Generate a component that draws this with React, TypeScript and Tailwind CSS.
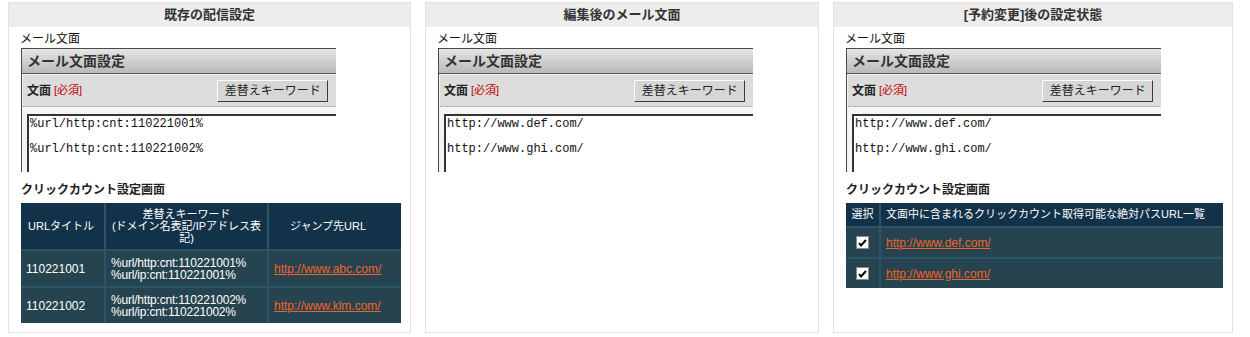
import React from 'react';

const jp = { fontFamily: '"Liberation Sans", "Noto Sans CJK JP", sans-serif' };
const mono = { fontFamily: '"Liberation Mono", "DejaVu Sans Mono", monospace' };

const CheckBox = () => (
  <div className="w-[13px] h-[13px] bg-white border border-[#8a8a8a] flex items-center justify-center">
    <svg width="9" height="8" viewBox="0 0 9 8">
      <path d="M1 4 L3 6.5 L8 1" fill="none" stroke="#000" strokeWidth="2" />
    </svg>
  </div>
);

const MailBox = ({ lines }: { lines: string[] }) => (
  <div className="w-[315px] h-[124px] overflow-hidden">
    <div className="w-[330px] border-t border-l border-[#4a4a4a] bg-[#f4f4f4] h-[140px]">
      <div className="h-[25px] bg-gradient-to-b from-[#e6e6e6] to-[#b9b9b9] border-b border-[#555] flex items-center pl-[5px] text-[14px] font-bold text-[#333]">
        メール文面設定
      </div>
      <div className="mt-[1px] ml-[1px] h-[32px] bg-[#dcdcdc] border-b border-dotted border-[#9a9a9a] flex items-center pl-[4px]">
        <span className="text-[12px] font-bold text-[#222]">文面</span>
        <span className="ml-[3px] text-[11px] text-[#c00000]">[必須]</span>
        <button className="ml-[135px] w-[111px] h-[22px] bg-[#d6d6d6] border border-t-white border-l-white border-b-[#3a3a3a] border-r-[#3a3a3a] text-[12px] text-[#222] leading-none">
          差替えキーワード
        </button>
      </div>
      <div className="ml-[5px] mt-[7px] bg-white border-t-2 border-l-2 border-[#333] pt-[2px] pl-[1px] h-[80px]">
        {lines.map((l, i) => (
          <div key={i} style={mono} className="text-[12px] leading-[12.5px] h-[25px] text-[#111]">
            {l}
          </div>
        ))}
      </div>
    </div>
  </div>
);

const Panel = ({ title, width, children }: { title: string; width: string; children: React.ReactNode }) => (
  <div className={`${width} h-[331px] border border-[#e2e2e2] bg-white flex flex-col`}>
    <div className="h-[24px] bg-[#eeedeb] flex items-center justify-center text-[13px] font-bold text-[#333]">{title}</div>
    <div className="pl-[11px] pt-[3px]">
      <div className="text-[12px] leading-[18px] text-[#111]">メール文面</div>
      <div className="pl-[1px]">{children}</div>
    </div>
  </div>
);

const App: React.FC = () => {
  const cellHead = 'bg-[#12324a] text-white text-[11px] whitespace-nowrap';
  const cellRow = 'bg-[#25444f] text-white text-[12px] whitespace-nowrap';

  return (
    <div style={jp} className="w-[1250px] h-[337px] bg-white flex pt-[2px] pl-[8px] gap-[14px]">
      <Panel title="既存の配信設定" width="w-[403px]">
        <MailBox lines={['%url/http:cnt:110221001%', '%url/http:cnt:110221002%']} />
        <div className="mt-[10px] text-[12px] leading-[16px] font-bold text-[#222]">クリックカウント設定画面</div>
        <div className="mt-[5px] w-[380px] bg-[#2a5566] grid grid-cols-[83px_161px_1fr] gap-[2px]">
          <div className={`${cellHead} h-[46px] flex items-center pl-[7px]`}>URLタイトル</div>
          <div className={`${cellHead} h-[46px] flex items-center justify-center text-center leading-[12px]`}>
            <span>
              差替えキーワード<br />(ドメイン名表記/IPアドレス表<br />記)
            </span>
          </div>
          <div className={`${cellHead} h-[46px] flex items-center justify-center pr-[14px]`}>ジャンプ先URL</div>

          <div className={`${cellRow} h-[35px] flex items-center pl-[5px]`}>110221001</div>
          <div className={`${cellRow} h-[35px] flex flex-col justify-center pl-[5px] text-[11px] leading-[12px] tracking-[-0.2px]`}>
            <span>%url/http:cnt:110221001%</span>
            <span>%url/ip:cnt:110221001%</span>
          </div>
          <div className={`${cellRow} h-[35px] flex items-center pl-[5px]`}>
            <span className="text-[#f3622c] underline">http://www.abc.com/</span>
          </div>

          <div className={`${cellRow} h-[35px] flex items-center pl-[5px]`}>110221002</div>
          <div className={`${cellRow} h-[35px] flex flex-col justify-center pl-[5px] text-[11px] leading-[12px] tracking-[-0.2px]`}>
            <span>%url/http:cnt:110221002%</span>
            <span>%url/ip:cnt:110221002%</span>
          </div>
          <div className={`${cellRow} h-[35px] flex items-center pl-[5px]`}>
            <span className="text-[#f3622c] underline">http://www.klm.com/</span>
          </div>
        </div>
      </Panel>

      <Panel title="編集後のメール文面" width="w-[394px]">
        <MailBox lines={['http://www.def.com/', 'http://www.ghi.com/']} />
      </Panel>

      <Panel title="[予約変更]後の設定状態" width="w-[400px]">
        <MailBox lines={['http://www.def.com/', 'http://www.ghi.com/']} />
        <div className="mt-[10px] text-[12px] leading-[16px] font-bold text-[#222]">クリックカウント設定画面</div>
        <div className="mt-[5px] w-[377px] bg-[#2a5566] grid grid-cols-[33px_1fr] gap-[2px]">
          <div className={`${cellHead} h-[23px] flex items-center justify-center`}>選択</div>
          <div className={`${cellHead} h-[23px] flex items-center pl-[5px]`}>文面中に含まれるクリックカウント取得可能な絶対パスURL一覧</div>

          <div className={`${cellRow} h-[29px] flex items-center justify-center`}><CheckBox /></div>
          <div className={`${cellRow} h-[29px] flex items-center pl-[5px]`}>
            <span className="text-[#f3622c] underline">http://www.def.com/</span>
          </div>

          <div className={`${cellRow} h-[29px] flex items-center justify-center`}><CheckBox /></div>
          <div className={`${cellRow} h-[29px] flex items-center pl-[5px]`}>
            <span className="text-[#f3622c] underline">http://www.ghi.com/</span>
          </div>
        </div>
      </Panel>
    </div>
  );
};

export default App;
